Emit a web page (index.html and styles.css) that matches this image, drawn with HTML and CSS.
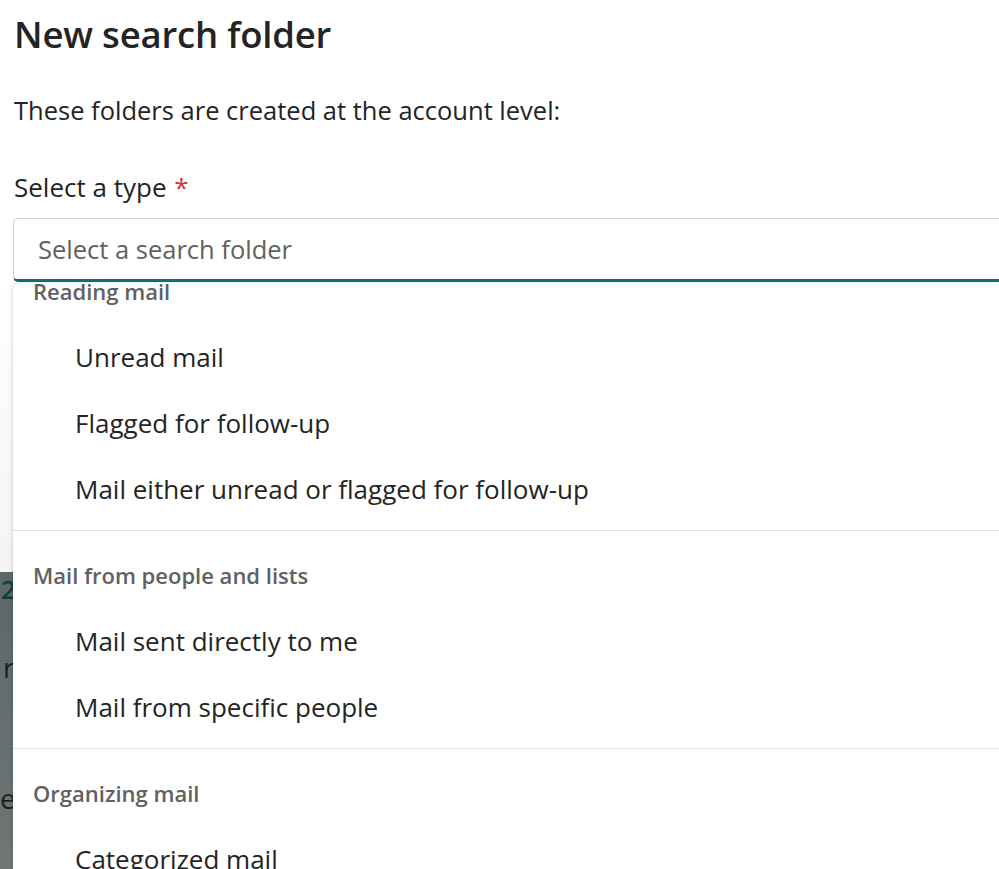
FILE: index.html
```html
<!DOCTYPE html>
<html lang="en">
<head>
<meta charset="utf-8">
<title>New search folder</title>
<link rel="stylesheet" href="styles.css">
</head>
<body>
<div class="page">
  <div class="dialog">
    <h1 class="title">New search folder</h1>
    <p class="desc">These folders are created at the account level:</p>
    <div class="field-label">Select a type <span class="req">*</span></div>
    <div class="combobox"><span class="placeholder">Select a search folder</span></div>
  </div>
  <div class="below">
    <div class="strip">
      <div class="strip-light"></div>
      <div class="strip-dark">
        <div class="bg-num">2</div>
        <div class="bg-text bg-r">r</div>
        <div class="bg-text bg-e">e</div>
      </div>
    </div>
    <div class="listbox" role="listbox">
      <div class="list-inner">
        <div class="group">
          <div class="group-header">Reading mail</div>
          <div class="option">Unread mail</div>
          <div class="option">Flagged for follow-up</div>
          <div class="option">Mail either unread or flagged for follow-up</div>
        </div>
        <div class="divider"></div>
        <div class="group">
          <div class="group-header">Mail from people and lists</div>
          <div class="option">Mail sent directly to me</div>
          <div class="option">Mail from specific people</div>
        </div>
        <div class="divider"></div>
        <div class="group">
          <div class="group-header">Organizing mail</div>
          <div class="option">Categorized mail</div>
        </div>
      </div>
    </div>
  </div>
</div>
</body>
</html>
```

FILE: styles.css
```css
html, body {
  margin: 0;
  padding: 0;
  background: #ffffff;
}
body {
  width: 999px;
  height: 869px;
  overflow: hidden;
  font-family: "Open Sans", "Noto Sans", sans-serif;
  color: #242424;
}
.page {
  display: flex;
  flex-direction: column;
  height: 869px;
}
.dialog {
  padding-left: 14px;
}
.title {
  margin: 0;
  padding-top: 6px;
  font-size: 36.5px;
  line-height: 56px;
  font-weight: 600;
  color: #242424;
  letter-spacing: -0.2px;
}
.desc {
  margin: 28px 0 0 0;
  font-size: 25.5px;
  line-height: 40px;
  color: #242424;
}
.field-label {
  margin-top: 37px;
  font-size: 26px;
  line-height: 40px;
  color: #242424;
}
.req {
  color: #d13438;
  margin-left: 1px;
}
.combobox {
  margin-top: 11px;
  margin-left: -1px;
  width: 1020px;
  height: 64px;
  box-sizing: border-box;
  border: 1px solid #d1d1d1;
  border-bottom: 3px solid #136f7a;
  border-radius: 5px 0 0 5px;
  padding-left: 24px;
  display: flex;
  align-items: center;
  background: #ffffff;
}
.placeholder {
  font-size: 25.5px;
  color: #616161;
}
.below {
  flex: 1;
  display: flex;
  min-height: 0;
}
.strip {
  width: 13px;
  flex: none;
  display: flex;
  flex-direction: column;
  overflow: hidden;
}
.strip-light {
  height: 290px;
  background: linear-gradient(to bottom, #ffffff, #f4f4f4);
}
.strip-dark {
  flex: 1;
  background: linear-gradient(to bottom, #5c6767, #6f7777);
  white-space: nowrap;
}
.bg-num {
  margin-top: 2px;
  padding-left: 1px;
  font-size: 26px;
  line-height: 30px;
  font-weight: 600;
  color: #0f3f45;
}
.bg-text {
  font-size: 28px;
  line-height: 30px;
  color: #1f1f1f;
}
.bg-r {
  margin-top: 48px;
  padding-left: 3px;
}
.bg-e {
  margin-top: 101px;
  padding-left: 0;
}
.listbox {
  flex: 1;
  margin-top: 1px;
  background: #ffffff;
  border-radius: 6px 0 0 0;
  box-shadow: 0 0 3px rgba(0, 0, 0, 0.14), 0 2px 6px rgba(0, 0, 0, 0.10);
  overflow: hidden;
}
.list-inner {
  margin-top: -25px;
}
.group-header {
  height: 66px;
  display: flex;
  align-items: center;
  padding-left: 20px;
  font-size: 22px;
  font-weight: 600;
  color: #616161;
}
.option {
  height: 66px;
  display: flex;
  align-items: center;
  padding-left: 62px;
  font-size: 26px;
  color: #242424;
}
.divider {
  height: 1px;
  background: #e0e0e0;
  margin: 8px 0 11px 0;
}
```
